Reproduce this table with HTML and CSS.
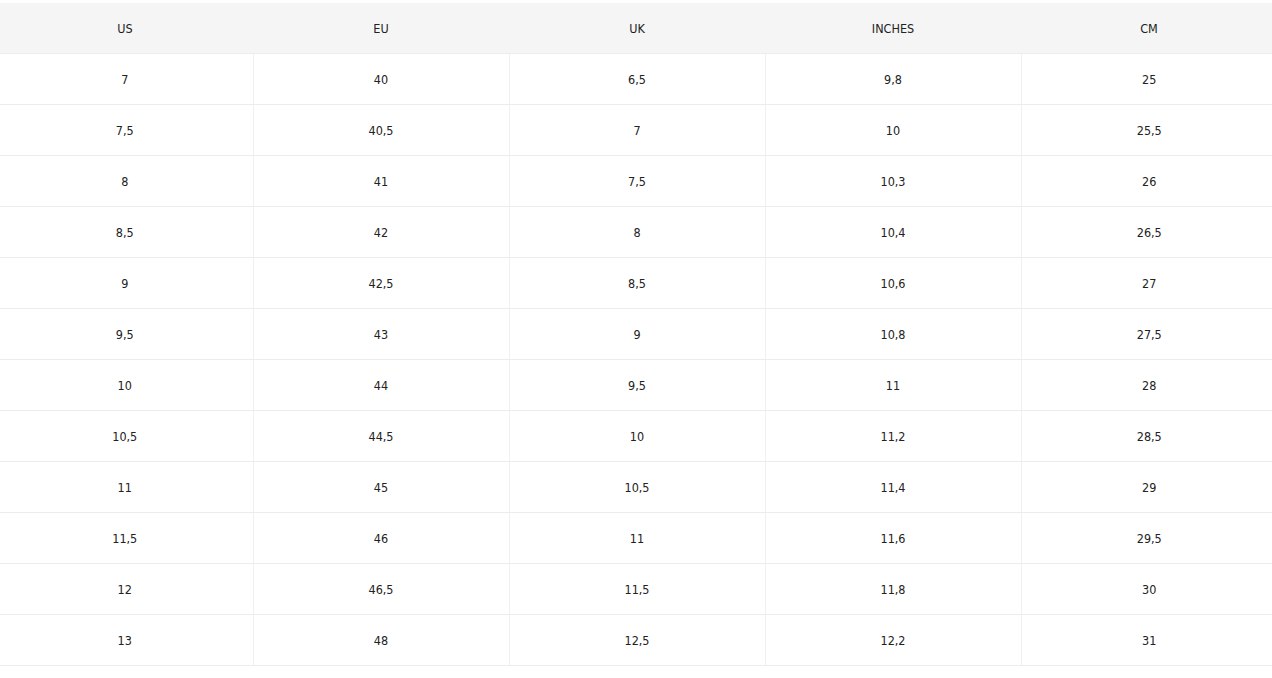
FILE: index.html
```html
<!DOCTYPE html>
<html>
<head>
<meta charset="utf-8">
<link rel="stylesheet" href="styles.css">
</head>
<body>
<div class="wrap">
<table class="sizes">
<thead>
<tr><th>US</th><th>EU</th><th>UK</th><th>INCHES</th><th>CM</th></tr>
</thead>
<tbody>
<tr><td>7</td><td>40</td><td>6,5</td><td>9,8</td><td>25</td></tr>
<tr><td>7,5</td><td>40,5</td><td>7</td><td>10</td><td>25,5</td></tr>
<tr><td>8</td><td>41</td><td>7,5</td><td>10,3</td><td>26</td></tr>
<tr><td>8,5</td><td>42</td><td>8</td><td>10,4</td><td>26,5</td></tr>
<tr><td>9</td><td>42,5</td><td>8,5</td><td>10,6</td><td>27</td></tr>
<tr><td>9,5</td><td>43</td><td>9</td><td>10,8</td><td>27,5</td></tr>
<tr><td>10</td><td>44</td><td>9,5</td><td>11</td><td>28</td></tr>
<tr><td>10,5</td><td>44,5</td><td>10</td><td>11,2</td><td>28,5</td></tr>
<tr><td>11</td><td>45</td><td>10,5</td><td>11,4</td><td>29</td></tr>
<tr><td>11,5</td><td>46</td><td>11</td><td>11,6</td><td>29,5</td></tr>
<tr><td>12</td><td>46,5</td><td>11,5</td><td>11,8</td><td>30</td></tr>
<tr><td>13</td><td>48</td><td>12,5</td><td>12,2</td><td>31</td></tr>
</tbody>
</table>
</div>
</body>
</html>
```
FILE: styles.css
```css
html, body {
  margin: 0;
  padding: 0;
  background: #fff;
  overflow: hidden;
}
.wrap {
  padding-top: 3px;
  margin-left: -3px;
  width: 1280px;
}
.sizes {
  width: 1280px;
  border-collapse: collapse;
  table-layout: fixed;
  font-family: "DejaVu Sans Condensed", "DejaVu Sans", sans-serif;
  font-size: 12.5px;
  color: #222;
}
.sizes th {
  height: 50px;
  padding: 0;
  background: #f5f5f5;
  font-weight: normal;
  text-align: center;
  border-bottom: 1px solid #ececec;
}
.sizes td {
  height: 50px;
  padding: 0;
  text-align: center;
  border-bottom: 1px solid #ececec;
  border-left: 1px solid #f0f0f0;
}
.sizes td:first-child {
  border-left: none;
}
```
